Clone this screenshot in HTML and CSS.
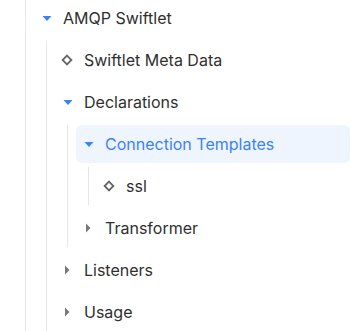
FILE: index.html
```html
<!DOCTYPE html>
<html>
<head>
<meta charset="utf-8">
<link rel="stylesheet" href="styles.css">
</head>
<body>
<div class="tree">
  <div class="node">
    <div class="row">
      <svg class="ic" viewBox="0 0 20 20"><polygon class="down" points="4.5,8 13.5,8 9,13"/></svg>
      <span class="label">AMQP Swiftlet</span>
    </div>
    <div class="children">
      <div class="node">
        <div class="row">
          <svg class="ic" viewBox="0 0 20 20"><polygon class="leaf" points="8,5.6 12.4,10 8,14.4 3.6,10"/></svg>
          <span class="label">Swiftlet Meta Data</span>
        </div>
      </div>
      <div class="node">
        <div class="row">
          <svg class="ic" viewBox="0 0 20 20"><polygon class="down" points="4.5,8 13.5,8 9,13"/></svg>
          <span class="label">Declarations</span>
        </div>
        <div class="children">
          <div class="node">
            <div class="row selected">
              <svg class="ic" viewBox="0 0 20 20"><polygon class="down" points="4.5,8 13.5,8 9,13"/></svg>
              <span class="label">Connection Templates</span>
            </div>
            <div class="children">
              <div class="node">
                <div class="row">
                  <svg class="ic" viewBox="0 0 20 20"><polygon class="leaf" points="8,5.6 12.4,10 8,14.4 3.6,10"/></svg>
                  <span class="label">ssl</span>
                </div>
              </div>
            </div>
          </div>
          <div class="node">
            <div class="row">
              <svg class="ic" viewBox="0 0 20 20"><polygon class="right" points="6,5.5 10.5,10 6,14.5"/></svg>
              <span class="label">Transformer</span>
            </div>
          </div>
        </div>
      </div>
      <div class="node">
        <div class="row">
          <svg class="ic" viewBox="0 0 20 20"><polygon class="right" points="6,5.5 10.5,10 6,14.5"/></svg>
          <span class="label">Listeners</span>
        </div>
      </div>
      <div class="node">
        <div class="row">
          <svg class="ic" viewBox="0 0 20 20"><polygon class="right" points="6,5.5 10.5,10 6,14.5"/></svg>
          <span class="label">Usage</span>
        </div>
      </div>
    </div>
  </div>
</div>
</body>
</html>
```

FILE: styles.css
```css
html, body {
  margin: 0;
  padding: 0;
  background: #ffffff;
  overflow: hidden;
}

body {
  font-family: Inter, "Noto Sans", sans-serif;
  font-size: 16px;
  color: #2f2f2f;
}

.tree {
  margin: -1px 1px 0 25px;
  padding-left: 8px;
  border-left: 1px solid #e6e6e6;
  min-height: 340px;
}

.node {
  display: flex;
  flex-direction: column;
  gap: 4px;
}

.children {
  display: flex;
  flex-direction: column;
  gap: 4px;
  margin-left: 12px;
  padding-left: 8px;
  border-left: 1px solid #e6e6e6;
}

.row {
  height: 38px;
  display: flex;
  align-items: center;
  padding-left: 4px;
  border-radius: 6px;
  white-space: nowrap;
}

.row.selected {
  background: #eef5ff;
  color: #3b82f6;
}

.ic {
  width: 20px;
  height: 20px;
  flex: none;
  margin-right: 5px;
}

.down {
  fill: #3b82f6;
}

.right {
  fill: #777777;
}

.leaf {
  fill: none;
  stroke: #666666;
  stroke-width: 1.8;
}

.label {
  line-height: 20px;
}
```
